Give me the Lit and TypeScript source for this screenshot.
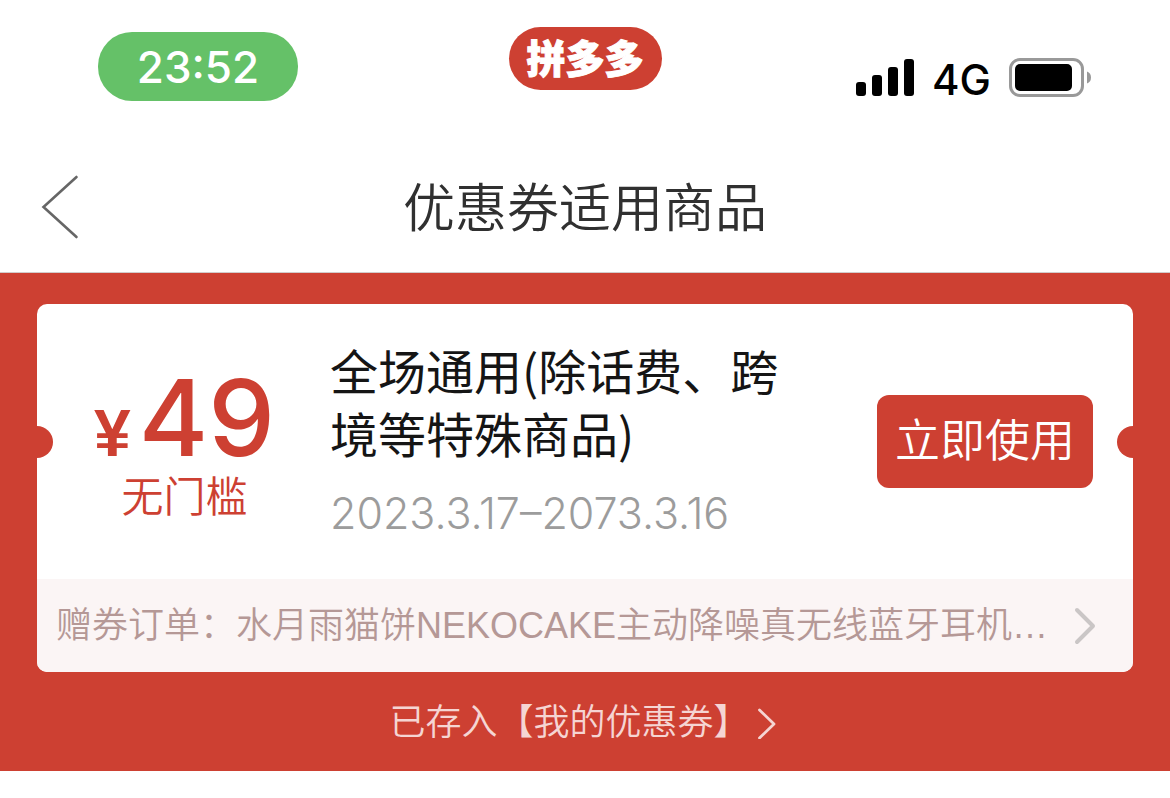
import { LitElement, html, css } from "lit";
import { customElement, property } from "lit/decorators.js";

@customElement("status-bar")
class StatusBar extends LitElement {
  @property() time = "";
  @property() network = "";

  static styles = css`
    :host {
      display: grid;
      grid-template-columns: 1fr auto 1fr;
      align-items: start;
      box-sizing: border-box;
      height: 142px;
      padding: 27px 78px 0;
      font-family: Inter, "Noto Sans CJK SC", sans-serif;
    }
    .time {
      justify-self: start;
      box-sizing: border-box;
      width: 200px;
      height: 69px;
      margin: 5px 0 0 20px;
      border-radius: 34px;
      background: #65c168;
      color: #fff;
      font-size: 44px;
      font-weight: 450;
      line-height: 70px;
      text-align: center;
    }
    .brand {
      width: 153px;
      height: 63px;
      border-radius: 32px;
      background: #cd4032;
      color: #fff;
      font-family: "Noto Sans CJK SC", sans-serif;
      font-size: 39px;
      font-weight: 900;
      line-height: 58px;
      text-align: center;
      -webkit-text-stroke: 1px #fff;
    }
    .signals {
      justify-self: end;
      display: flex;
      align-items: center;
      gap: 18px;
      margin-top: 26px;
      height: 50px;
    }
    .network {
      padding-top: 4px;
      font-size: 42px;
      font-weight: 450;
      line-height: 50px;
      color: #000;
    }
    svg {
      display: block;
    }
  `;

  render() {
    return html`
      <span class="time">${this.time}</span>
      <span class="brand">拼多多</span>
      <div class="signals">
        <svg width="58" height="38" viewBox="0 0 58 38" aria-hidden="true">
          <rect x="0" y="23" width="10" height="14" rx="3" />
          <rect x="16" y="16" width="10" height="21" rx="3" />
          <rect x="32" y="8" width="10" height="29" rx="3" />
          <rect x="48" y="0" width="10" height="37" rx="3" />
        </svg>
        <span class="network">${this.network}</span>
        <svg width="83" height="40" viewBox="0 0 83 40" aria-hidden="true">
          <rect x="1.5" y="1.5" width="72" height="36" rx="9.5" fill="#fff" stroke="#999" stroke-width="3" />
          <rect x="6" y="6" width="57" height="27" rx="5" />
          <path d="M78 13.500Q82 15 82 19.500Q82 24 78 25.500Z" fill="#999" />
        </svg>
      </div>
    `;
  }
}

@customElement("nav-header")
class NavHeader extends LitElement {
  @property() heading = "";

  static styles = css`
    :host {
      display: grid;
      grid-template-columns: 120px 1fr 120px;
      align-items: center;
      height: 130px;
      border-bottom: 1px solid #d2cccb;
      font-family: "Noto Sans CJK SC", sans-serif;
    }
    .back {
      display: flex;
      align-items: center;
      height: 100%;
      padding: 0 0 0 41px;
      border: 0;
      background: none;
    }
    .heading {
      margin: 0;
      padding-bottom: 4px;
      font-size: 52px;
      font-weight: 350;
      line-height: 76px;
      text-align: center;
      color: #303030;
    }
  `;

  render() {
    return html`
      <button class="back" aria-label="返回">
        <svg width="38" height="64" viewBox="0 0 38 64" fill="none" aria-hidden="true">
          <path d="M35.500 2L2.500 32L35.500 62" stroke="#666" stroke-width="2.600" stroke-linecap="round" />
        </svg>
      </button>
      <h1 class="heading">${this.heading}</h1>
    `;
  }
}

@customElement("coupon-card")
class CouponCard extends LitElement {
  @property() amount = "";
  @property() threshold = "";
  @property() scope = "";
  @property() period = "";
  @property() order = "";

  static styles = css`
    :host {
      display: block;
      overflow: hidden;
      border-radius: 10px;
      background: #fff;
      font-family: "Noto Sans CJK SC", sans-serif;
    }
    .body {
      position: relative;
      display: grid;
      grid-template-columns: 293px 1fr auto;
      align-items: center;
      min-height: 275px;
      padding-right: 40px;
    }
    .body::before,
    .body::after {
      content: "";
      position: absolute;
      top: 50%;
      width: 32px;
      height: 32px;
      margin-top: -16px;
      border-radius: 50%;
      background: #cd4032;
    }
    .body::before {
      left: -16px;
    }
    .body::after {
      right: -16px;
    }
    .value {
      padding: 14px 0 0 2px;
      color: #cd4032;
      text-align: center;
    }
    .price {
      display: flex;
      align-items: baseline;
      justify-content: center;
      gap: 8px;
    }
    .currency {
      font-family: "Liberation Sans", sans-serif;
      font-size: 66px;
      font-weight: 700;
      line-height: 40px;
    }
    .amount {
      font-family: Inter, sans-serif;
      font-size: 106px;
      font-weight: 550;
      line-height: 80px;
    }
    .threshold {
      margin: 10px 0 0;
      font-size: 42px;
      font-weight: 350;
      line-height: 52px;
    }
    .details {
      padding-bottom: 3px;
    }
    .scope {
      max-width: 460px;
      margin: 0;
      font-size: 48px;
      font-weight: 400;
      line-height: 63px;
      color: #151515;
    }
    .period {
      margin: 19px 0 0;
      font-family: Inter, sans-serif;
      font-size: 43px;
      font-weight: 350;
      line-height: 60px;
      color: #9c9c9c;
    }
    .use {
      padding: 0 18px 7px;
      height: 93px;
      border: 0;
      border-radius: 12px;
      background: #cd4032;
      color: #fff;
      font-family: inherit;
      font-size: 45px;
      font-weight: 350;
      line-height: 86px;
    }
    .order {
      display: flex;
      align-items: center;
      justify-content: space-between;
      gap: 20px;
      height: 93px;
      padding: 0 36px 0 19px;
      background: #fbf5f5;
      color: #b59896;
      font-size: 36px;
      font-weight: 350;
      text-decoration: none;
    }
    .order-text {
      line-height: 56px;
      white-space: nowrap;
      font-family: "Liberation Sans", "Noto Sans CJK SC", sans-serif;
    }
  `;

  render() {
    return html`
      <div class="body">
        <div class="value">
          <div class="price">
            <span class="currency">¥</span><span class="amount">${this.amount}</span>
          </div>
          <p class="threshold">${this.threshold}</p>
        </div>
        <div class="details">
          <h2 class="scope">${this.scope}</h2>
          <p class="period">${this.period}</p>
        </div>
        <button class="use">立即使用</button>
      </div>
      <a class="order" href="#order">
        <span class="order-text">${this.order}</span>
        <svg width="24" height="38" viewBox="0 0 24 38" fill="none" aria-hidden="true">
          <path d="M4 3L20 19L4 35" stroke="#cac6c6" stroke-width="4" stroke-linecap="round" stroke-linejoin="round" />
        </svg>
      </a>
    `;
  }
}

@customElement("app-root")
class AppRoot extends LitElement {
  static styles = css`
    :host {
      display: block;
      min-height: 100vh;
      background: #fff;
      font-family: "Noto Sans CJK SC", sans-serif;
    }
    .panel {
      padding: 31px 37px 0;
      background: #cd4032;
    }
    .saved {
      display: flex;
      align-items: center;
      justify-content: center;
      gap: 7px;
      height: 99px;
      padding-right: 4px;
      color: #f5d5d3;
      font-size: 36px;
      font-weight: 350;
      text-decoration: none;
    }
    .saved-text {
      padding-bottom: 6px;
    }
  `;

  render() {
    return html`
      <status-bar time="23:52" network="4G"></status-bar>
      <nav-header heading="优惠券适用商品"></nav-header>
      <main class="panel">
        <coupon-card
          amount="49"
          threshold="无门槛"
          scope="全场通用(除话费、跨境等特殊商品)"
          period="2023.3.17–2073.3.16"
          order="赠券订单：水月雨猫饼NEKOCAKE主动降噪真无线蓝牙耳机…"
        ></coupon-card>
        <a class="saved" href="#coupons">
          <span class="saved-text">已存入【我的优惠券】</span>
          <svg width="20" height="34" viewBox="0 0 20 34" fill="none" aria-hidden="true">
            <path d="M2.500 5L17 19L2.500 33" stroke="#f5d5d3" stroke-width="2.800" stroke-linecap="round" stroke-linejoin="round" />
          </svg>
        </a>
      </main>
    `;
  }
}
